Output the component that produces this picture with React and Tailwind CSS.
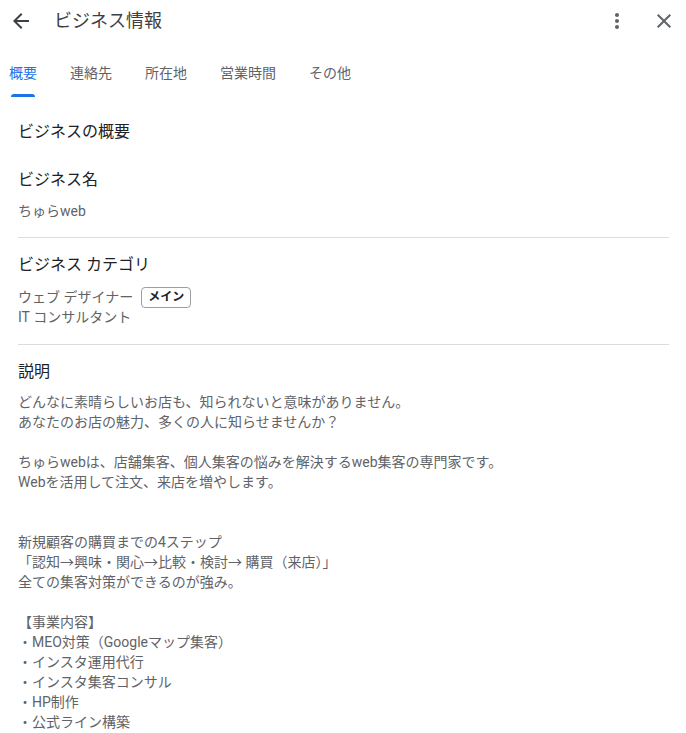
import { useState } from "react";

const tabs = ["概要", "連絡先", "所在地", "営業時間", "その他"];

const description = [
  "どんなに素晴らしいお店も、知られないと意味がありません。",
  "あなたのお店の魅力、多くの人に知らせませんか？",
  "",
  "ちゅらwebは、店舗集客、個人集客の悩みを解決するweb集客の専門家です。",
  "Webを活用して注文、来店を増やします。",
  "",
  "",
  "新規顧客の購買までの4ステップ",
  "「認知→興味・関心→比較・検討→ 購買（来店）」",
  "全ての集客対策ができるのが強み。",
  "",
  "【事業内容】",
  "・MEO対策（Googleマップ集客）",
  "・インスタ運用代行",
  "・インスタ集客コンサル",
  "・HP制作",
  "・公式ライン構築",
];

export default function App() {
  const [active, setActive] = useState(0);

  return (
    <div
      className="w-[686px] h-[733px] overflow-hidden bg-white text-[#202124]"
      style={{ fontFamily: 'Roboto, "Noto Sans CJK JP", sans-serif' }}
    >
      {/* ヘッダー */}
      <div className="h-[41px] flex items-center pl-[9px] pr-[10px]">
        <button className="w-6 h-6 text-[#3c4043]">
          <svg viewBox="0 0 24 24" className="w-6 h-6" fill="currentColor">
            <path d="M20 11H7.83l5.59-5.59L12 4l-8 8 8 8 1.41-1.41L7.83 13H20v-2z" />
          </svg>
        </button>
        <h1 className="ml-[21px] text-[18px] leading-6 text-[#3c4043]">ビジネス情報</h1>
        <div className="ml-auto flex items-center gap-[23px] text-[#5f6368]">
          <svg viewBox="0 0 24 24" className="w-6 h-6" fill="currentColor">
            <path d="M12 8c1.1 0 2-.9 2-2s-.9-2-2-2-2 .9-2 2 .9 2 2 2zm0 2c-1.1 0-2 .9-2 2s.9 2 2 2 2-.9 2-2-.9-2-2-2zm0 6c-1.1 0-2 .9-2 2s.9 2 2 2 2-.9 2-2-.9-2-2-2z" />
          </svg>
          <svg viewBox="0 0 24 24" className="w-6 h-6" fill="currentColor">
            <path d="M19 6.41L17.59 5 12 10.59 6.41 5 5 6.41 10.59 12 5 17.59 6.41 19 12 13.41 17.59 19 19 17.59 13.41 12z" />
          </svg>
        </div>
      </div>

      {/* タブ */}
      <div className="flex gap-[33px] pl-[9px] pt-[22px]">
        {tabs.map((t, i) => (
          <button key={t} onClick={() => setActive(i)} className="flex flex-col">
            <span
              className={
                "text-[14px] leading-5 " + (i === active ? "text-[#1a73e8]" : "text-[#5f6368]")
              }
            >
              {t}
            </span>
            <span
              className={
                "mt-[11px] mx-[2px] h-[3px] rounded-t-[3px] " +
                (i === active ? "bg-[#1a73e8]" : "bg-transparent")
              }
            />
          </button>
        ))}
      </div>

      {/* 内容 */}
      <div className="px-[18px] pr-[17px]">
        <h2 className="mt-[23px] text-[16px] leading-6">ビジネスの概要</h2>

        <h3 className="mt-[24px] text-[16px] leading-6">ビジネス名</h3>
        <p className="mt-[9px] text-[14px] leading-5 text-[#5f6368]">ちゅらweb</p>

        <div className="mt-[16px] h-px bg-[#dadce0]" />

        <h3 className="mt-[15px] text-[16px] leading-6">ビジネス カテゴリ</h3>
        <div className="mt-[10px] h-5 flex items-center text-[14px] text-[#5f6368]">
          <span>ウェブ デザイナー</span>
          <span className="ml-[8px] h-[21px] px-[6px] flex items-center border border-[#9aa0a6] rounded-[4px] text-[12px] font-bold text-[#202124]">
            メイン
          </span>
        </div>
        <p className="text-[14px] leading-5 text-[#5f6368]">IT コンサルタント</p>

        <div className="mt-[17px] h-px bg-[#dadce0]" />

        <h3 className="mt-[15px] text-[16px] leading-6">説明</h3>
        <div className="mt-[8px] text-[14px] leading-5 text-[#5f6368]">
          {description.map((line, i) => (
            <p key={i} className="h-5 whitespace-pre">
              {line}
            </p>
          ))}
        </div>
      </div>
    </div>
  );
}
